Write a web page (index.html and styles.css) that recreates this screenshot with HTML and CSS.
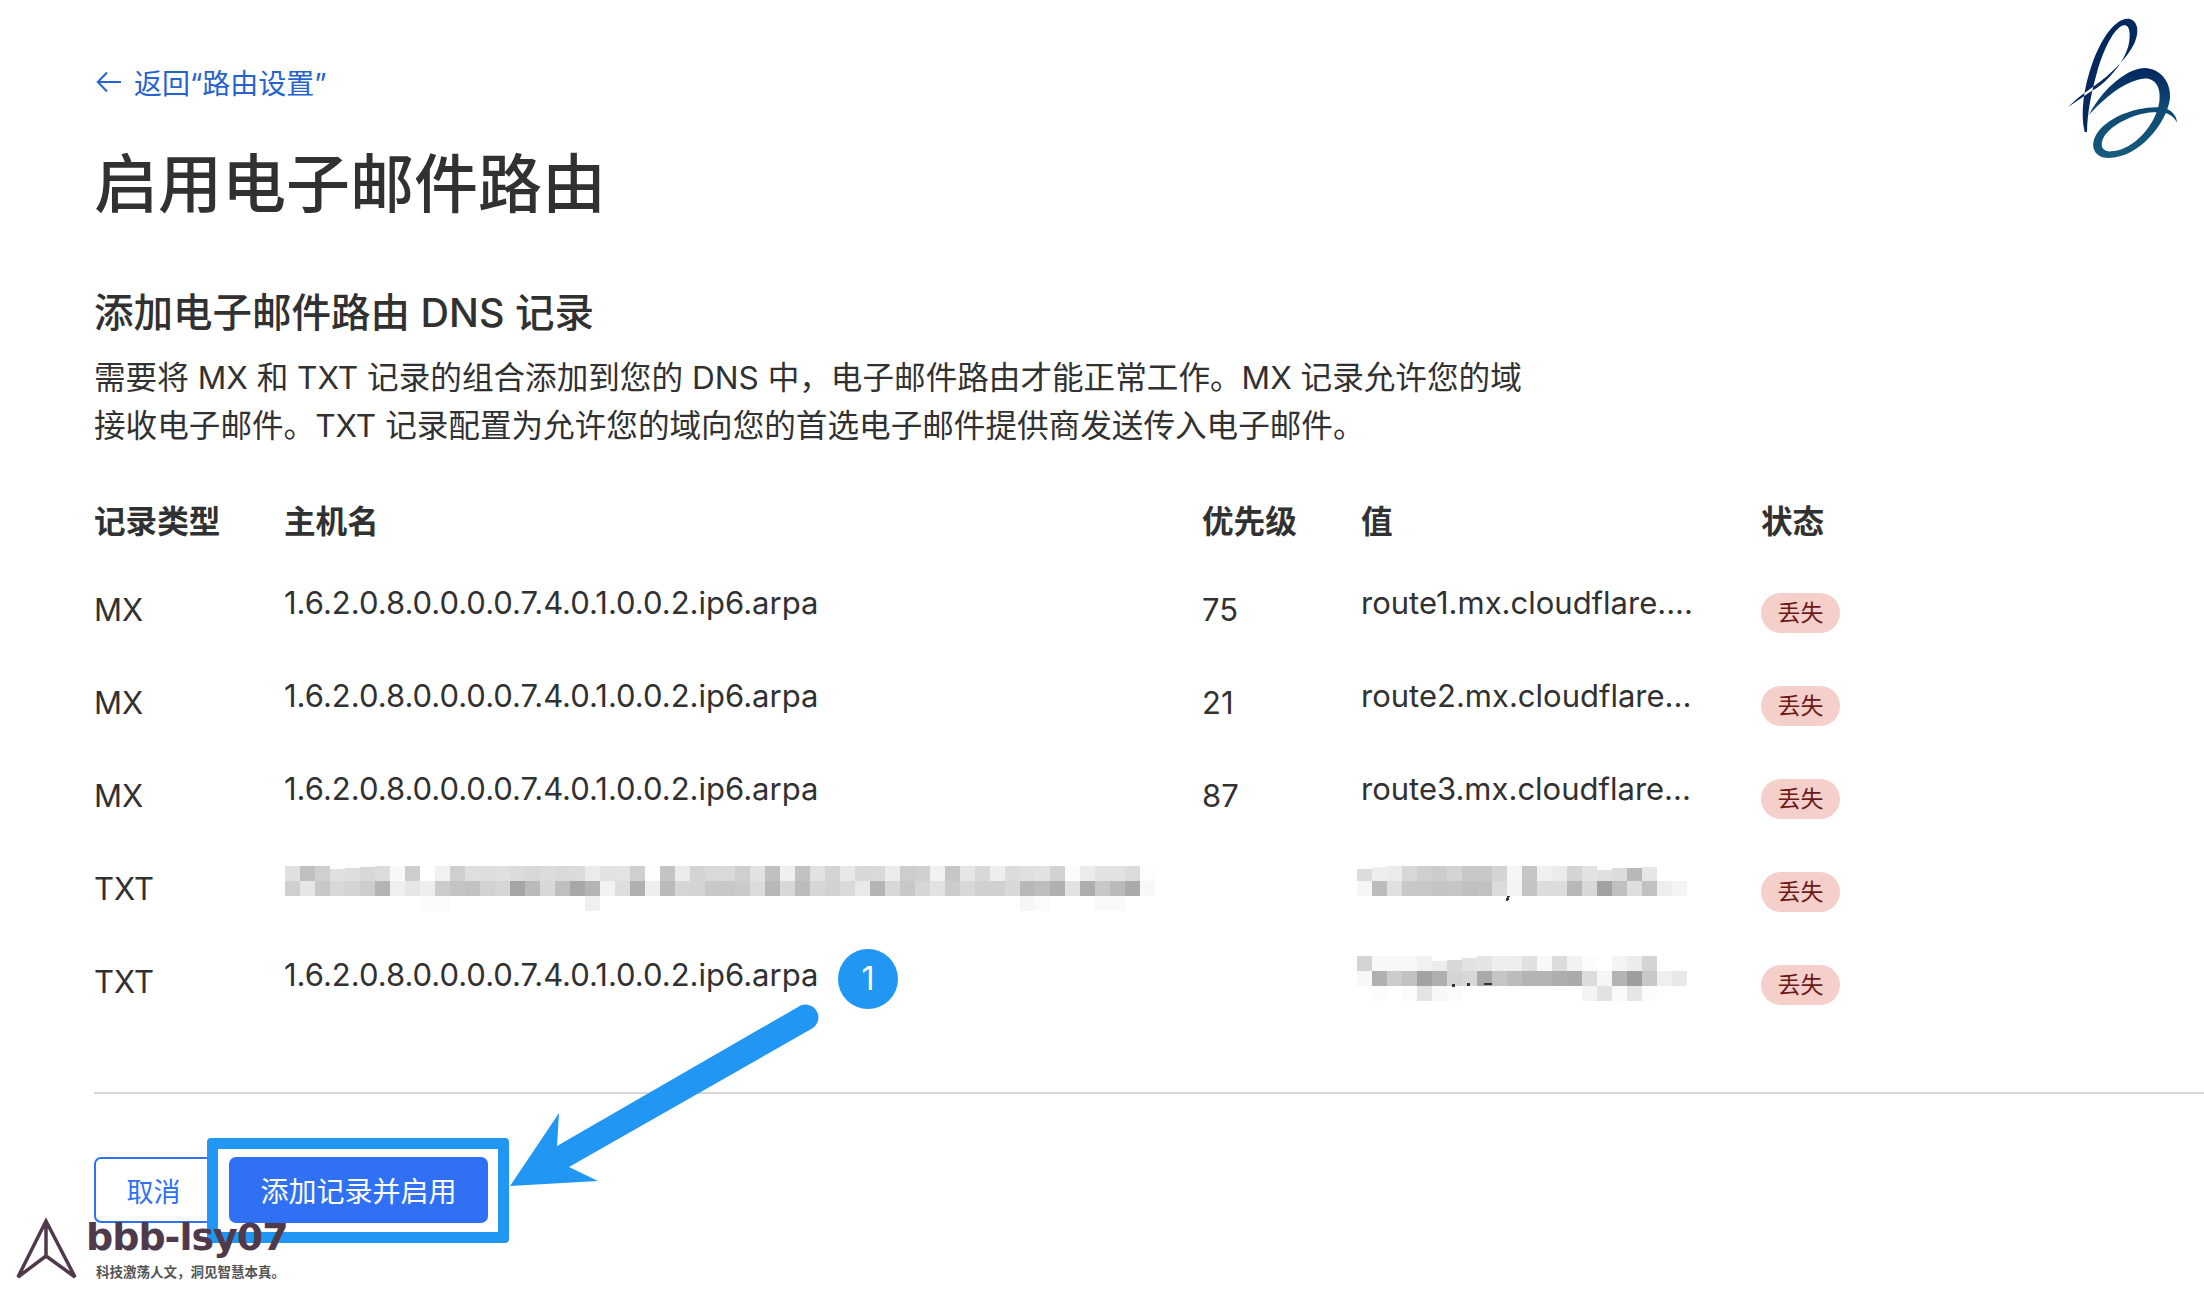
FILE: index.html
```html
<!DOCTYPE html>
<html lang="zh-CN">
<head>
<meta charset="utf-8">
<title>启用电子邮件路由</title>
<link rel="stylesheet" href="styles.css">
</head>
<body>
<div class="page">
  <main class="main">
    <a class="back" href="#">
      <svg class="back-icon" viewBox="0 0 26 26" width="26" height="26"><path d="M25 13H2M11 3.500 1.800 13l9.200 9.500" fill="none" stroke="currentColor" stroke-width="2"/></svg>
      <span>返回“路由设置”</span>
    </a>
    <h1 class="title">启用电子邮件路由</h1>
    <h2 class="subtitle">添加电子邮件路由 DNS 记录</h2>
    <p class="intro">需要将 MX 和 TXT 记录的组合添加到您的 DNS 中，电子邮件路由才能正常工作。MX 记录允许您的域接收电子邮件。TXT 记录配置为允许您的域向您的首选电子邮件提供商发送传入电子邮件。</p>

    <div class="row head">
      <div>记录类型</div><div>主机名</div><div>优先级</div><div>值</div><div>状态</div>
    </div>
    <div class="row">
      <div>MX</div><div class="up">1.6.2.0.8.0.0.0.0.7.4.0.1.0.0.2.ip6.arpa</div><div>75</div><div class="up">route1.mx.cloudflare....</div><div class="down"><span class="badge">丢失</span></div>
    </div>
    <div class="row">
      <div>MX</div><div class="up">1.6.2.0.8.0.0.0.0.7.4.0.1.0.0.2.ip6.arpa</div><div>21</div><div class="up">route2.mx.cloudflare...</div><div class="down"><span class="badge">丢失</span></div>
    </div>
    <div class="row">
      <div>MX</div><div class="up">1.6.2.0.8.0.0.0.0.7.4.0.1.0.0.2.ip6.arpa</div><div>87</div><div class="up">route3.mx.cloudflare...</div><div class="down"><span class="badge">丢失</span></div>
    </div>
    <div class="row">
      <div>TXT</div>
      <div class="blurred host-blur">
        <svg class="mosaic" width="880" height="45" viewBox="0 0 880 45">
          <g>
            <rect x="0" y="0" fill="#e0e0e0"/><rect x="15" y="0" fill="#c0c0c0"/><rect x="30" y="0" fill="#cfcfcf"/><rect x="45" y="3" fill="#e0e0e0"/><rect x="60" y="2" fill="#dedede"/><rect x="75" y="1" fill="#d8d8d8"/><rect x="90" y="0" fill="#dcdcdc"/><rect x="105" y="0" fill="#f8f8f8"/><rect x="120" y="0" fill="#cdcdcd"/><rect x="150" y="0" fill="#f1f1f1"/><rect x="165" y="0" fill="#cfcfcf"/><rect x="180" y="0" fill="#dfdfdf"/><rect x="195" y="0" fill="#dedede"/><rect x="210" y="0" fill="#e0e0e0"/><rect x="225" y="0" fill="#dcdcdc"/><rect x="240" y="0" fill="#d8d8d8"/><rect x="255" y="0" fill="#dcdcdc"/><rect x="270" y="0" fill="#d9d9d9"/><rect x="285" y="0" fill="#dbdbdb"/><rect x="300" y="0" fill="#ebebeb"/><rect x="315" y="0" fill="#e2e2e2"/><rect x="330" y="0" fill="#e3e3e3"/><rect x="345" y="0" fill="#cfcfcf"/><rect x="360" y="0" fill="#fdfdfd"/><rect x="375" y="0" fill="#c4c4c4"/><rect x="390" y="0" fill="#ececec"/><rect x="405" y="0" fill="#d4d4d4"/><rect x="420" y="0" fill="#d9d9d9"/><rect x="435" y="0" fill="#dadada"/><rect x="450" y="0" fill="#cfcfcf"/><rect x="465" y="0" fill="#e2e2e2"/><rect x="480" y="0" fill="#c0c0c0"/><rect x="495" y="0" fill="#efefef"/><rect x="510" y="0" fill="#c2c2c2"/><rect x="525" y="0" fill="#e2e2e2"/><rect x="540" y="0" fill="#d4d4d4"/><rect x="555" y="0" fill="#e8e8e8"/><rect x="570" y="0" fill="#d8d8d8"/><rect x="585" y="0" fill="#dadada"/><rect x="600" y="0" fill="#ececec"/><rect x="615" y="0" fill="#cdcdcd"/><rect x="630" y="0" fill="#d0d0d0"/><rect x="645" y="0" fill="#f2f2f2"/><rect x="660" y="0" fill="#c6c6c6"/><rect x="675" y="0" fill="#e6e6e6"/><rect x="690" y="0" fill="#d8d8d8"/><rect x="705" y="0" fill="#eeeeee"/><rect x="720" y="0" fill="#dcdcdc"/><rect x="735" y="0" fill="#e0e0e0"/><rect x="750" y="0" fill="#e2e2e2"/><rect x="765" y="0" fill="#d2d2d2"/><rect x="780" y="0" fill="#fcfcfc"/><rect x="795" y="0" fill="#ececec"/><rect x="810" y="0" fill="#e2e2e2"/><rect x="825" y="0" fill="#e2e2e2"/><rect x="840" y="0" fill="#dcdcdc"/><rect x="855" y="0" fill="#fdfdfd"/>
          </g>
          <g>
            <rect x="0" y="15" fill="#cfcfcf"/><rect x="15" y="15" fill="#e6e6e6"/><rect x="30" y="15" fill="#c8c8c8"/><rect x="45" y="15" fill="#d8d8d8"/><rect x="60" y="15" fill="#d4d4d4"/><rect x="75" y="15" fill="#cdcdcd"/><rect x="90" y="15" fill="#b4b4b4"/><rect x="105" y="15" fill="#efefef"/><rect x="120" y="15" fill="#e6e6e6"/><rect x="135" y="15" fill="#eeeeee"/><rect x="150" y="15" fill="#cbcbcb"/><rect x="165" y="15" fill="#c4c4c4"/><rect x="180" y="15" fill="#c2c2c2"/><rect x="195" y="15" fill="#d2d2d2"/><rect x="210" y="15" fill="#d6d6d6"/><rect x="225" y="15" fill="#a5a5a5"/><rect x="240" y="15" fill="#bababa"/><rect x="255" y="15" fill="#d8d8d8"/><rect x="270" y="15" fill="#bfbfbf"/><rect x="285" y="15" fill="#a8a8a8"/><rect x="300" y="15" fill="#b4b4b4"/><rect x="315" y="15" fill="#f2f2f2"/><rect x="330" y="15" fill="#dedede"/><rect x="345" y="15" fill="#b0b0b0"/><rect x="360" y="15" fill="#eeeeee"/><rect x="375" y="15" fill="#bababa"/><rect x="390" y="15" fill="#d6d6d6"/><rect x="405" y="15" fill="#d4d4d4"/><rect x="420" y="15" fill="#c8c8c8"/><rect x="435" y="15" fill="#c8c8c8"/><rect x="450" y="15" fill="#cacaca"/><rect x="465" y="15" fill="#dcdcdc"/><rect x="480" y="15" fill="#b8b8b8"/><rect x="495" y="15" fill="#d8d8d8"/><rect x="510" y="15" fill="#bcbcbc"/><rect x="525" y="15" fill="#d6d6d6"/><rect x="540" y="15" fill="#d2d2d2"/><rect x="555" y="15" fill="#dadada"/><rect x="570" y="15" fill="#e9e9e9"/><rect x="585" y="15" fill="#b4b4b4"/><rect x="600" y="15" fill="#d8d8d8"/><rect x="615" y="15" fill="#c8c8c8"/><rect x="630" y="15" fill="#d6d6d6"/><rect x="645" y="15" fill="#e2e2e2"/><rect x="660" y="15" fill="#cccccc"/><rect x="675" y="15" fill="#d8d8d8"/><rect x="690" y="15" fill="#d0d0d0"/><rect x="705" y="15" fill="#d0d0d0"/><rect x="720" y="15" fill="#d8d8d8"/><rect x="735" y="15" fill="#b8b8b8"/><rect x="750" y="15" fill="#bdbdbd"/><rect x="765" y="15" fill="#b0b0b0"/><rect x="780" y="15" fill="#e2e2e2"/><rect x="795" y="15" fill="#adadad"/><rect x="810" y="15" fill="#c8c8c8"/><rect x="825" y="15" fill="#bababa"/><rect x="840" y="15" fill="#aaaaaa"/><rect x="855" y="15" fill="#f8f8f8"/>
          </g>
          <g>
            <rect x="135" y="30" fill="#fbfbfb"/><rect x="150" y="30" fill="#fbfbfb"/><rect x="300" y="30" fill="#efefef"/><rect x="735" y="30" fill="#f6f6f6"/><rect x="750" y="30" fill="#fbfbfb"/><rect x="810" y="30" fill="#f9f9f9"/><rect x="825" y="30" fill="#f9f9f9"/>
          </g>
        </svg>
      </div>
      <div></div>
      <div class="blurred value-blur">
        <svg class="mosaic" width="330" height="45" viewBox="0 0 330 45">
          <g>
            <rect x="0" y="3" fill="#dcdcdc"/><rect x="15" y="1" fill="#eeeeee"/><rect x="30" y="0" fill="#ececec"/><rect x="45" y="0" fill="#d8d8d8"/><rect x="60" y="0" fill="#cfcfcf"/><rect x="75" y="0" fill="#cccccc"/><rect x="90" y="0" fill="#d4d4d4"/><rect x="105" y="0" fill="#c8c8c8"/><rect x="120" y="0" fill="#c8c8c8"/><rect x="135" y="0" fill="#d4d4d4"/><rect x="150" y="0" fill="#f6f6f6"/><rect x="165" y="0" fill="#c6c6c6"/><rect x="180" y="0" fill="#f0f0f0"/><rect x="195" y="0" fill="#ebebeb"/><rect x="210" y="0" fill="#d4d4d4"/><rect x="225" y="0" fill="#e2e2e2"/><rect x="240" y="4" fill="#e0e0e0"/><rect x="255" y="2" fill="#dcdcdc"/><rect x="270" y="2" fill="#b8b8b8"/><rect x="285" y="1" fill="#e6e6e6"/>
            <rect x="0" y="15" fill="#f6f6f6"/><rect x="15" y="15" fill="#bcbcbc"/><rect x="30" y="15" fill="#e0e0e0"/><rect x="45" y="15" fill="#c8c8c8"/><rect x="60" y="15" fill="#c8c8c8"/><rect x="75" y="15" fill="#c4c4c4"/><rect x="90" y="15" fill="#c6c6c6"/><rect x="105" y="15" fill="#c0c0c0"/><rect x="120" y="15" fill="#c2c2c2"/><rect x="135" y="15" fill="#dcdcdc"/><rect x="150" y="15" fill="#f4f4f4"/><rect x="165" y="15" fill="#c4c4c4"/><rect x="180" y="15" fill="#dcdcdc"/><rect x="195" y="15" fill="#dcdcdc"/><rect x="210" y="15" fill="#b8b8b8"/><rect x="225" y="15" fill="#d8d8d8"/><rect x="240" y="15" fill="#a2a2a2"/><rect x="255" y="15" fill="#c0c0c0"/><rect x="270" y="15" fill="#dedede"/><rect x="285" y="15" fill="#c2c2c2"/><rect x="300" y="15" fill="#eeeeee"/><rect x="315" y="15" fill="#f4f4f4"/>
          </g>
          <path d="M150 30h3l-2 5h-2z" fill="#333"/>
        </svg>
      </div>
      <div class="down"><span class="badge">丢失</span></div>
    </div>
    <div class="row">
      <div>TXT</div>
      <div class="up host-with-mark">
        <span>1.6.2.0.8.0.0.0.0.7.4.0.1.0.0.2.ip6.arpa</span>
      </div>
      <div></div>
      <div class="blurred value-blur-low">
        <svg class="mosaic" width="330" height="45" viewBox="0 0 330 45">
          <g>
            <rect x="0" y="0" fill="#d4d4d4"/><rect x="15" y="0" fill="#f8f8f8"/><rect x="30" y="0" fill="#f8f8f8"/><rect x="45" y="0" fill="#f8f8f8"/><rect x="60" y="0" fill="#f2f2f2"/><rect x="75" y="5" fill="#ececec"/><rect x="90" y="4" fill="#d8d8d8"/><rect x="105" y="2" fill="#e2e2e2"/><rect x="120" y="0" fill="#e4e4e4"/><rect x="135" y="0" fill="#eeeeee"/><rect x="150" y="0" fill="#ededed"/><rect x="165" y="0" fill="#e0e0e0"/><rect x="180" y="0" fill="#f8f8f8"/><rect x="195" y="0" fill="#dcdcdc"/><rect x="210" y="0" fill="#f2f2f2"/><rect x="225" y="0" fill="#fcfcfc"/><rect x="255" y="0" fill="#f4f4f4"/><rect x="270" y="0" fill="#ececec"/><rect x="285" y="0" fill="#d4d4d4"/>
            <rect x="0" y="15" fill="#f8f8f8"/><rect x="15" y="15" fill="#b0b0b0"/><rect x="30" y="15" fill="#cccccc"/><rect x="45" y="15" fill="#c2c2c2"/><rect x="60" y="15" fill="#a2a2a2"/><rect x="75" y="15" fill="#b0b0b0"/><rect x="90" y="15" fill="#d4d4d4"/><rect x="105" y="15" fill="#d8d8d8"/><rect x="120" y="15" fill="#aaaaaa"/><rect x="135" y="15" fill="#c6c6c6"/><rect x="150" y="15" fill="#bcbcbc"/><rect x="165" y="15" fill="#b4b4b4"/><rect x="180" y="15" fill="#b4b4b4"/><rect x="195" y="15" fill="#aeaeae"/><rect x="210" y="15" fill="#aaaaaa"/><rect x="225" y="15" fill="#dcdcdc"/><rect x="240" y="15" fill="#f6f6f6"/><rect x="255" y="15" fill="#b4b4b4"/><rect x="270" y="15" fill="#9e9e9e"/><rect x="285" y="15" fill="#c8c8c8"/><rect x="300" y="15" fill="#efefef"/><rect x="315" y="15" fill="#e8e8e8"/>
            <rect x="15" y="30" fill="#fcfcfc"/><rect x="45" y="30" fill="#fcfcfc"/><rect x="60" y="30" fill="#e4e4e4"/><rect x="75" y="30" fill="#f8f8f8"/><rect x="90" y="30" fill="#fcfcfc"/><rect x="225" y="30" fill="#f4f4f4"/><rect x="240" y="30" fill="#e2e2e2"/><rect x="255" y="30" fill="#fafafa"/><rect x="270" y="30" fill="#e6e6e6"/><rect x="285" y="30" fill="#fcfcfc"/>
          </g>
          <path d="M95 28h3v3h-3zM110 27h3v3h-3zM127 27h8v2h-8z" fill="#333"/>
        </svg>
      </div>
      <div class="down"><span class="badge">丢失</span></div>
    </div>

    <hr class="divider">

    <div class="actions">
      <button class="btn btn-outline" type="button">取消</button>
      <div class="primary-wrap">
        <button class="btn btn-primary" type="button">添加记录并启用</button>
        <span class="frame"></span>
      </div>
    </div>
  </main>

  <svg class="brand" width="164" height="170" viewBox="0 0 492 510">
    <defs>
      <linearGradient id="bgrad" x1="0" y1="0" x2="0" y2="1">
        <stop offset="0" stop-color="#03275f"/>
        <stop offset="0.45" stop-color="#0f4a75"/>
        <stop offset="1" stop-color="#155a7c"/>
      </linearGradient>
    </defs>
    <path fill="#03275f" d="M134 396C120 340 132 260 157 190C182 120 222 58 262 56C288 56 302 85 284 128C260 178 205 228 168 254C140 274 105 298 84 322C112 302 140 282 170 264C216 232 262 172 268 122C272 90 265 72 250 76C222 84 190 150 172 214C155 274 142 335 141 396Z"/>
    <path fill="url(#bgrad)" d="M146 346C180 280 250 208 312 204C362 204 394 248 390 295C382 365 300 474 205 474C165 474 148 440 168 405C198 352 290 318 360 322C392 325 410 345 411 368C402 350 385 338 360 336C300 332 218 368 192 410C176 440 190 456 215 454C285 448 348 372 358 305C364 262 345 232 310 236C255 242 190 296 146 346Z"/>
  </svg>

  <svg class="arrow" width="120" height="190" viewBox="500 1000 330 190">
    <path fill="#2196f3" d="M557 1146L798 1007A12.500 12.500 0 0 1 813 1028L569 1167L598 1181L510 1186L559 1113Z"/>
  </svg>
  <span class="step">1</span>

  <div class="watermark">
    <svg class="wm-icon" width="64" height="64" viewBox="14 1216 64 64">
      <path d="M46 1220L75 1276L46 1255L18 1276ZM46 1220V1255" fill="none" stroke="#4f3a4c" stroke-width="3.500" stroke-linejoin="miter"/>
    </svg>
    <div class="wm-text">
      <span class="wm-name">bbb-lsy07</span>
      <span class="wm-tag">科技激荡人文，洞见智慧本真。</span>
    </div>
  </div>
</div>
</body>
</html>
```
FILE: styles.css
```css
* { box-sizing: border-box; }
html, body { margin: 0; background: #fff; }
body {
  font-family: Inter, "Noto Sans CJK SC", sans-serif;
  color: #313131;
}
.page { position: relative; width: 2204px; height: 1294px; overflow: hidden; }
.main { padding: 63px 0 0 94px; }

.back {
  display: flex;
  align-items: center;
  gap: 12px;
  height: 38px;
  padding-left: 2px;
  font-size: 28px;
  color: #2563d0;
  text-decoration: none;
}
.back-icon { flex: none; }

.title {
  margin: 43px 0 0;
  font-size: 64px;
  line-height: 80px;
  font-weight: 500;
}
.subtitle {
  margin: 64px 0 0;
  font-size: 39.500px;
  line-height: 50px;
  font-weight: 500;
}
.intro {
  margin: 16px 0 0;
  width: 1440px;
  font-size: 31.600px;
  line-height: 48px;
}

.row {
  display: grid;
  grid-template-columns: 190px 918px 159px 400px auto;
  align-items: center;
  height: 93px;
  font-size: 31px;
  line-height: 44px;
}
.head {
  height: 44px;
  margin: 50px 0 19px;
  font-size: 31.600px;
  font-weight: 700;
}
.up { padding-bottom: 14px; }
.down { padding-top: 7px; display: flex; }
.blurred { display: flex; }
.host-blur { margin-left: 1px; }
.value-blur { margin-left: -4px; }
.value-blur-low { margin-left: -4px; padding-bottom: 6px; }
.mosaic { display: block; shape-rendering: crispEdges; }
.mosaic rect { width: 15px; height: 15px; }

.badge {
  display: inline-block;
  width: 79px;
  height: 40px;
  border-radius: 20px;
  background: #f5cfca;
  color: #6b1a1a;
  font-size: 23px;
  line-height: 40px;
  text-align: center;
}

.divider {
  height: 2px;
  margin: 64px 0 63px;
  border: 0;
  background: #d6d6d6;
}

.actions { display: flex; gap: 16px; align-items: flex-start; }
.btn {
  height: 66px;
  border-radius: 7px;
  font-family: inherit;
  font-size: 27px;
}
.btn-outline {
  width: 119px;
  border: 2px solid #3070f5;
  background: #fff;
  color: #3070f5;
}
.btn-primary {
  display: block;
  width: 259px;
  border: 0;
  background: #3070f5;
  color: #fff;
  font-size: 28px;
}
.primary-wrap { position: relative; }
.frame {
  position: absolute;
  top: -19px;
  left: -22px;
  right: -21px;
  bottom: -20px;
  border: 11px solid #2196f3;
  border-radius: 4px;
}

.brand { position: absolute; top: 0; right: 0; }
.arrow { position: absolute; left: 500px; top: 1000px; width: 330px; height: 190px; }
.step {
  position: absolute;
  left: 838px;
  top: 949px;
  width: 60px;
  height: 60px;
  border-radius: 50%;
  background: #2196f3;
  color: #fff;
  font-size: 32px;
  line-height: 60px;
  text-align: center;
}

.watermark {
  position: absolute;
  left: 14px;
  top: 1216px;
  width: 290px;
  height: 64px;
}
.wm-icon { position: absolute; left: 0; top: 1px; }
.wm-text { position: absolute; left: 72px; top: 3px; }
.wm-name {
  display: block;
  font-family: "DejaVu Sans", sans-serif;
  font-size: 38px;
  line-height: 36px;
  font-weight: 700;
  letter-spacing: -1px;
  color: #4f3a4c;
  white-space: nowrap;
}
.wm-tag {
  display: block;
  margin: 9px 0 0 10px;
  font-family: "Noto Sans CJK SC", sans-serif;
  font-size: 13.500px;
  line-height: 14px;
  font-weight: 700;
  color: #555;
  white-space: nowrap;
}
```
